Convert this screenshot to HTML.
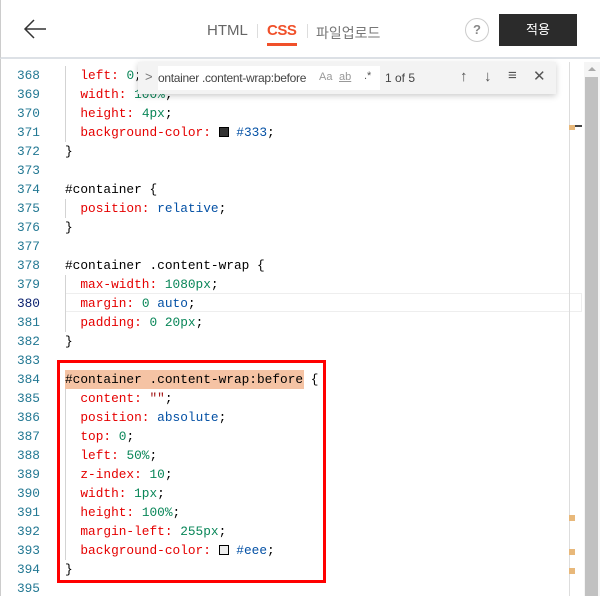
<!DOCTYPE html>
<html><head><meta charset="utf-8"><style>
*{margin:0;padding:0;box-sizing:border-box}
body{width:600px;height:596px;overflow:hidden;background:#fff;position:relative;font-family:"Liberation Sans","Noto Sans CJK KR",sans-serif}
.hdr{position:absolute;left:0;top:0;width:600px;height:59px;background:#fff;border-bottom:2px solid #dde1e6;border-left:1px solid #ccc}
.tab{position:absolute;top:22px;font-size:15px;color:#666}
.code{position:absolute;left:0;top:66px;width:600px;font-family:"Liberation Mono",monospace;font-size:12.8px}
.ln{position:absolute;left:0;width:40px;text-align:right;color:#237893;height:19px;line-height:19px}
.cl{position:absolute;left:65px;height:19px;line-height:19px;white-space:pre;color:#000}
.p{color:#e50000}.n{color:#098658}.v{color:#0451a5}.s{color:#a31515}
.guide{position:absolute;left:65px;width:1px;background:#d3d3d3}
</style></head><body>
<div style="position:absolute;left:0;top:0;width:1px;height:596px;background:#ccc"></div>
<div class="hdr">
<svg style="position:absolute;left:22px;top:19px" width="24" height="20" viewBox="0 0 24 20"><path d="M11 1 L2 10 L11 19 M2 10 H23" stroke="#333" stroke-width="1.5" fill="none"/></svg>
<span class="tab" style="left:206px">HTML</span>
<span style="position:absolute;left:256px;top:24px;width:1px;height:14px;background:#ddd"></span>
<span class="tab" style="left:266px;color:#f0502a;font-weight:bold;letter-spacing:-0.5px">CSS</span>
<span style="position:absolute;left:266px;top:43px;width:30px;height:3px;background:#f0502a"></span>
<span style="position:absolute;left:306px;top:24px;width:1px;height:14px;background:#ddd"></span>
<span class="tab" style="left:315px;font-size:14px;top:23px;color:#777">파일업로드</span>
<div style="position:absolute;left:464px;top:18px;width:24px;height:24px;border:1px solid #ccc;border-radius:50%;text-align:center;line-height:22px;font-size:13px;color:#888;font-weight:bold">?</div>
<div style="position:absolute;left:498px;top:14px;width:78px;height:32px;background:#2b2b2b;color:#fff;font-size:13px;text-align:center;line-height:32px">적용</div>
</div>
<div class="code">
<div class="guide" style="top:0;height:76px"></div>
<div class="guide" style="top:133px;height:19px"></div>
<div class="guide" style="top:209px;height:57px"></div>
<div class="guide" style="top:323px;height:171px"></div>
<div style="position:absolute;left:66px;top:227px;width:516px;height:19px;border:1px solid #eee;border-left:none"></div>
<div style="position:absolute;left:65px;top:304px;width:239px;height:19px;background:#f5c3a4"></div>
</div>
<div class="code" id="c"></div>
<script>
var L=[
['368','  <span class=p>left:</span> <span class=n>0</span>;'],
['369','  <span class=p>width:</span> <span class=n>100%</span>;'],
['370','  <span class=p>height:</span> <span class=n>4px</span>;'],
['371','  <span class=p>background-color:</span> <span style="display:inline-block;width:10px;height:10px;background:#333;border:1px solid #000;vertical-align:-1px"></span> <span class=v>#333</span>;'],
['372','}'],['373',''],
['374','#container {'],
['375','  <span class=p>position:</span> <span class=v>relative</span>;'],
['376','}'],['377',''],
['378','#container .content-wrap {'],
['379','  <span class=p>max-width:</span> <span class=n>1080px</span>;'],
['380','  <span class=p>margin:</span> <span class=n>0</span> <span class=v>auto</span>;'],
['381','  <span class=p>padding:</span> <span class=n>0 20px</span>;'],
['382','}'],['383',''],
['384','#container .content-wrap:before {'],
['385','  <span class=p>content:</span> <span class=s>""</span>;'],
['386','  <span class=p>position:</span> <span class=v>absolute</span>;'],
['387','  <span class=p>top:</span> <span class=n>0</span>;'],
['388','  <span class=p>left:</span> <span class=n>50%</span>;'],
['389','  <span class=p>z-index:</span> <span class=n>10</span>;'],
['390','  <span class=p>width:</span> <span class=n>1px</span>;'],
['391','  <span class=p>height:</span> <span class=n>100%</span>;'],
['392','  <span class=p>margin-left:</span> <span class=n>255px</span>;'],
['393','  <span class=p>background-color:</span> <span style="display:inline-block;width:10px;height:10px;background:#eee;border:1px solid #000;vertical-align:-1px"></span> <span class=v>#eee</span>;'],
['394','}'],['395','']];
var h='';L.forEach(function(l,i){h+='<div class=ln style="top:'+(i*19)+'px'+(l[0]=='380'?';color:#0b216f':'')+'">'+l[0]+'</div><div class=cl style="top:'+(i*19)+'px">'+l[1]+'</div>';});
document.getElementById('c').innerHTML=h;
</script>
<div style="position:absolute;left:57px;top:360px;width:269px;height:223px;border:3px solid #f00"></div>
<div style="position:absolute;left:138px;top:62px;width:418px;height:32px;background:#f3f3f3;box-shadow:0 2px 6px rgba(0,0,0,.2)">
<span style="position:absolute;left:7px;top:7px;color:#777;font-size:13px">&gt;</span>
<div style="position:absolute;left:20px;top:4px;width:222px;height:24px;background:#fff"></div>
<span style="position:absolute;left:20px;top:4px;width:156px;overflow:hidden;white-space:nowrap;font-size:12px;line-height:24px;color:#444;letter-spacing:-0.3px">ontainer .content-wrap:before</span>
<span style="position:absolute;left:181px;top:9px;font-size:11px;color:#999">Aa</span>
<span style="position:absolute;left:201px;top:9px;font-size:11px;color:#999;text-decoration:underline">ab</span>
<span style="position:absolute;left:226px;top:8px;font-size:11px;color:#555">.*</span>
<span style="position:absolute;left:247px;top:9px;font-size:12px;color:#444">1 of 5</span>
<span style="position:absolute;left:322px;top:6px;font-size:15px;color:#555">↑</span>
<span style="position:absolute;left:346px;top:6px;font-size:15px;color:#555">↓</span>
<span style="position:absolute;left:370px;top:5px;font-size:15px;color:#555">≡</span>
<span style="position:absolute;left:395px;top:5px;font-size:15px;color:#555">✕</span>
</div>
<div style="position:absolute;left:569px;top:62px;width:1px;height:534px;background:#ddd"></div>
<div style="position:absolute;left:569px;top:125px;width:13px;height:2px;background:#444"></div>
<div style="position:absolute;left:569px;top:125px;width:6px;height:5px;background:#e8b87a"></div>
<div style="position:absolute;left:569px;top:515px;width:6px;height:6px;background:#e8b87a"></div>
<div style="position:absolute;left:569px;top:549px;width:6px;height:6px;background:#e8b87a"></div>
<div style="position:absolute;left:569px;top:568px;width:6px;height:6px;background:#e8b87a"></div>
<div style="position:absolute;left:584px;top:62px;width:16px;height:534px;background:#f5f5f5"></div>
<div style="position:absolute;left:588px;top:67px;width:0;height:0;border-left:4px solid transparent;border-right:4px solid transparent;border-bottom:4px solid #aaa"></div>
<div style="position:absolute;left:585px;top:77px;width:13px;height:519px;background:#c1c1c1"></div>
</body></html>
